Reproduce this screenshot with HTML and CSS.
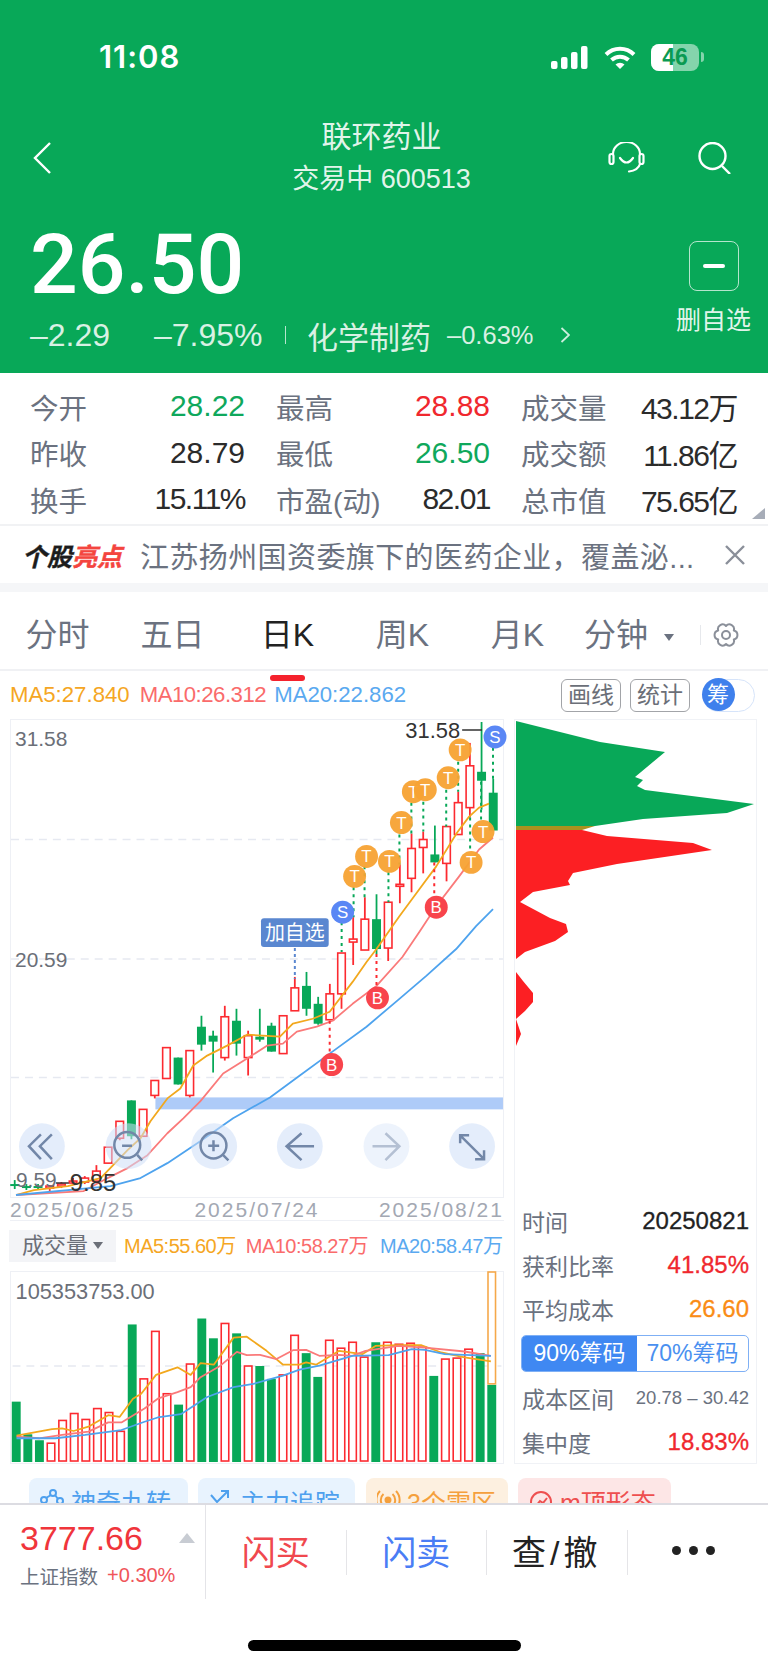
FILE: index.html
```html
<!DOCTYPE html>
<html lang="zh-CN">
<head>
    <meta charset="UTF-8">
    <meta name="viewport" content="width=device-width, initial-scale=1.0">
    <title>联环药业 600513</title>
    <link rel="stylesheet" href="styles.css">
</head>
<body>
<div class="page">
    <header class="top">
        <div class="status">
            <span class="clock">11:08</span>
            <div class="status-icons">
                <svg class="signal" width="37" height="23" viewBox="0 0 37 23"><rect x="0" y="15" width="6.5" height="8" rx="2"/><rect x="10" y="11" width="6.5" height="12" rx="2"/><rect x="20" y="6" width="6.5" height="17" rx="2"/><rect x="30" y="0" width="6.5" height="23" rx="2"/></svg>
                <svg class="wifi" width="32" height="23" viewBox="0 0 32 23"><path d="M2 8.5A20 20 0 0 1 30 8.5M7.5 14A12.5 12.5 0 0 1 24.5 14" fill="none" stroke="#fff" stroke-width="4"/><path d="M11.5 18.6A6.5 6.5 0 0 1 20.500 18.600L16 23Z" fill="#fff"/></svg>
                <div class="battery"><div class="battery-fill"></div><span class="battery-num">46</span></div>
                <div class="battery-nib"></div>
            </div>
        </div>
        <div class="nav">
            <svg class="back" width="18" height="32" viewBox="0 0 18 32"><path d="M17 1 2 16 17 31" fill="none" stroke="#fff" stroke-width="2.400"/></svg>
            <div class="nav-title">
                <div class="stock-name">联环药业</div>
                <div class="stock-code">交易中 600513</div>
            </div>
            <svg class="headset" width="37" height="32" viewBox="0 0 37 32" fill="none" stroke="#fff" stroke-width="2.200" stroke-linecap="round"><path d="M5 12A13.500 12 0 0 1 32 12"/><rect x="1.500" y="12" width="4" height="10" rx="2"/><rect x="31.500" y="12" width="4" height="10" rx="2"/><path d="M12 16Q18.500 25 25 16"/><path d="M32 22Q30 28.500 21 29.500"/></svg>
            <svg class="search" width="33" height="32" viewBox="0 0 33 32" fill="none" stroke="#fff" stroke-width="2.400"><circle cx="14.500" cy="14" r="13"/><path d="M24 24 32 32"/></svg>
        </div>
        <div class="quote">
            <div class="quote-left">
                <div class="price">26.50</div>
                <div class="quote-sub">
                    <span class="chg">–2.29</span>
                    <span class="pct">–7.95%</span>
                    <span class="quote-bar"></span>
                    <span class="sector">化学制药</span>
                    <span class="sector-pct">–0.63%</span>
                    <svg class="sector-more" width="10" height="16" viewBox="0 0 10 16"><path d="M1.500 1 9 8 1.500 15" fill="none" stroke="#fff" stroke-opacity=".8" stroke-width="1.800"/></svg>
                </div>
            </div>
            <div class="quote-right">
                <div class="minus-box"><span class="minus-bar"></span></div>
                <div class="minus-label">删自选</div>
            </div>
        </div>
    </header>

    <section class="stats">
        <div class="stat"><span class="stat-name">今开</span><span class="stat-val up-green">28.22</span></div>
        <div class="stat"><span class="stat-name">最高</span><span class="stat-val up-red">28.88</span></div>
        <div class="stat"><span class="stat-name">成交量</span><span class="stat-val stat-tight">43.12万</span></div>
        <div class="stat"><span class="stat-name">昨收</span><span class="stat-val">28.79</span></div>
        <div class="stat"><span class="stat-name">最低</span><span class="stat-val up-green">26.50</span></div>
        <div class="stat"><span class="stat-name">成交额</span><span class="stat-val stat-tight">11.86亿</span></div>
        <div class="stat"><span class="stat-name">换手</span><span class="stat-val stat-tight">15.11%</span></div>
        <div class="stat"><span class="stat-name">市盈(动)</span><span class="stat-val stat-tight">82.01</span></div>
        <div class="stat"><span class="stat-name">总市值</span><span class="stat-val stat-tight">75.65亿</span></div>
        <span class="stats-corner"></span>
    </section>

    <section class="notice">
        <div class="notice-logo">个股<em>亮点</em></div>
        <div class="notice-text">江苏扬州国资委旗下的医药企业，覆盖泌...</div>
        <svg class="notice-close" width="22" height="22" viewBox="0 0 22 22"><path d="M2 2 20 20M20 2 2 20" stroke="#8a8f99" stroke-width="2.400"/></svg>
    </section>

    <nav class="tabs">
        <a class="tab">分时</a>
        <a class="tab">五日</a>
        <a class="tab tab-on">日K</a>
        <a class="tab">周K</a>
        <a class="tab">月K</a>
        <a class="tab tab-min">分钟<i class="tab-arrow"></i></a>
        <span class="tab-split"></span>
        <svg class="gear" width="26" height="26" viewBox="0 0 26 26" fill="none" stroke="#8a8f99" stroke-width="2" stroke-linejoin="round"><path d="M13 4A4.600 4.600 0 0 1 20.800 8.500A4.600 4.600 0 0 1 20.800 17.500A4.600 4.600 0 0 1 13 22A4.600 4.600 0 0 1 5.200 17.500A4.600 4.600 0 0 1 5.200 8.500A4.600 4.600 0 0 1 13 4Z"/><circle cx="13" cy="13" r="4"/></svg>
    </nav>

    <div class="ma-row">
        <span class="ma5 ma-text">MA5:27.840</span>
        <span class="ma10 ma-text">MA10:26.312</span>
        <span class="ma20 ma-text">MA20:22.862</span>
        <div class="ma-tools">
            <span class="tool-btn">画线</span>
            <span class="tool-btn">统计</span>
            <div class="chip-toggle"><span class="chip-knob">筹</span></div>
        </div>
    </div>

    <div class="board">
        <div class="board-left">
            <svg class="kline" width="494" height="479" viewBox="10 720 494 479">
                <path class="grid-dash" d="M10 840H504M10 960H504M10 1079H504"/>
                <rect x="155" y="1099" width="349" height="12" fill="#aecbf8"/>
                <g id="candles"></g>
                <g id="maLines"></g>
                <g id="dots"></g>
                <g id="marks"></g>
                <g class="round-btns">
                    <circle cx="41" cy="1148" r="23"/><circle cx="128" cy="1148" r="23"/><circle cx="214" cy="1148" r="23"/><circle cx="300" cy="1148" r="23"/><circle class="btn-off" cx="387" cy="1148" r="23"/><circle cx="473" cy="1148" r="23"/>
                </g>
                <g class="btn-icons">
                    <path d="M40 1136 28 1148 40 1161M51 1136 39 1148 51 1161"/>
                    <circle cx="126.700" cy="1146.700" r="13"/><path d="M136.700 1156.700 141.700 1162.300M121.500 1147.500H131.500"/>
                    <circle cx="213.300" cy="1147.300" r="13"/><path d="M222.800 1156.800 228.300 1162.300M213.300 1142V1153M208 1147.500H219"/>
                    <path d="M286.700 1148H314.300M301.700 1135 286.700 1148 301.700 1162"/>
                    <path class="icon-off" d="M373 1148H400M386 1135 400 1148 386 1162"/>
                    <path d="M461 1137 485 1161M461 1145V1137H470M485 1152V1161H476"/>
                </g>
                <text class="axis-num" x="14" y="746">31.58</text>
                <text class="axis-num" x="14" y="968">20.59</text>
                <text class="axis-num" x="15" y="1189">9.59</text>
                <text class="peak-num" x="406" y="738">31.58</text>
                <path d="M463 730H483M55 1185H68" stroke="#333" stroke-width="1.500"/>
                <text class="low-num" x="69" y="1193">9.85</text>
                <g class="watch-tag">
                    <path d="M295 949V980" stroke="#5a87d0" stroke-width="2" stroke-dasharray="3 3"/>
                    <rect x="261" y="919" width="68" height="29" rx="3" fill="#5a87d0"/>
                    <text x="295" y="941">加自选</text>
                </g>
            </svg>
            <div class="dates"><span>2025/06/25</span><span>2025/07/24</span><span>2025/08/21</span></div>
            <div class="vol-head">
                <div class="vol-pick">成交量<i class="vol-arrow"></i></div>
                <span class="ma5 vol-ma">MA5:55.60万</span>
                <span class="ma10 vol-ma">MA10:58.27万</span>
                <span class="ma20 vol-ma">MA20:58.47万</span>
            </div>
            <svg class="volume" width="494" height="193" viewBox="10 1272 494 193">
                <path class="grid-dash" d="M10 1367H504"/>
                <g id="volBars"></g>
                <g id="volLines"></g>
                <text class="axis-num vol-max" x="13" y="1299">105353753.00</text>
            </svg>
        </div>
        <aside class="chips">
            <svg class="chips-shape" width="241" height="470" viewBox="515 721 241 470">
                <polygon fill="#08a858" points="516,722 600,743 665,753 635,778 643,781 637,787 645,791 754,805 727,814 643,820 595,827 516,827"/>
                <polygon fill="#a8921f" points="516,827 595,827 582,831 516,831"/>
                <polygon fill="#fc1f23" points="516,831 582,831 607,837 693,844 712,851 617,865 573,874 568,882 570,886 533,893 520,903 550,919 566,925 568,933 555,942 525,953 516,960"/>
                <polygon fill="#fc1f23" points="516,973 523,982 533,994 533,1003 525,1012 516,1020 521,1035 516,1047"/>
            </svg>
            <div class="chips-info">
                <div class="info-row"><span>时间</span><b class="info-dark">20250821</b></div>
                <div class="info-row"><span>获利比率</span><b class="info-red">41.85%</b></div>
                <div class="info-row"><span>平均成本</span><b class="info-orange">26.60</b></div>
                <div class="seg"><span class="seg-on">90%筹码</span><span class="seg-off">70%筹码</span></div>
                <div class="info-row"><span>成本区间</span><b class="info-range">20.78 – 30.42</b></div>
                <div class="info-row"><span>集中度</span><b class="info-red">18.83%</b></div>
            </div>
        </aside>
    </div>

    <div class="tags">
        <div class="tag tag-blue"><svg width="25" height="26" viewBox="0 0 25 26" fill="none" stroke="#4ea0ee" stroke-width="2"><circle cx="4" cy="11" r="3"/><circle cx="13" cy="4" r="3"/><circle cx="20" cy="12" r="3"/><path d="M6 9 11 6M15 6 18 10"/></svg><span>神奇九转</span></div>
        <div class="tag tag-track"><svg width="25" height="26" viewBox="0 0 25 26" fill="none" stroke="#4ea0ee" stroke-width="2"><path d="M2 6 8 13 19 2M12 2H19V9"/></svg><span>主力追踪</span></div>
        <div class="tag tag-orange"><svg width="24" height="26" viewBox="0 0 24 26" fill="none" stroke="#f5a03c" stroke-width="2"><circle cx="11" cy="11" r="2.500" fill="#f5a03c"/><path d="M6.500 5A8 8 0 0 0 6.500 17M15.500 5A8 8 0 0 1 15.500 17M3 2A13 13 0 0 0 3 20M19 2A13 13 0 0 1 19 20"/></svg><span>3个雷区</span></div>
        <div class="tag tag-red"><svg width="25" height="26" viewBox="0 0 25 26" fill="none" stroke="#ee4f4f" stroke-width="2"><circle cx="12" cy="13" r="10"/><path d="M7 17 11 12 14 14 18 9"/></svg><span>m顶形态</span></div>
    </div>

    <footer class="dock">
        <div class="dock-main">
            <div class="index-box">
                <div class="index-num">3777.66<i class="index-arrow"></i></div>
                <div class="index-sub"><span class="index-name">上证指数</span><span class="index-pct">+0.30%</span></div>
            </div>
            <div class="dock-btns">
                <a class="dock-btn dock-buy">闪买</a>
                <a class="dock-btn dock-sell">闪卖</a>
                <a class="dock-btn dock-query">查/撤</a>
                <a class="dock-btn dock-more"><i></i><i></i><i></i></a>
            </div>
        </div>
        <div class="home-bar"></div>
    </footer>
</div>
<script src="chart.js"></script>
</body>
</html>
```
FILE: styles.css
```css
* {
    box-sizing: border-box;
}

body {
    margin: 0;
    background: #fff;
    font-family: "Liberation Sans", "Noto Sans CJK SC", sans-serif;
    color: #222;
}

.page {
    width: 768px;
    height: 1667px;
    overflow: hidden;
}

.top {
    height: 373px;
    background: #08a858;
    color: #fff;
}

.status {
    height: 116px;
    padding: 40px 27px 0 99px;
    display: flex;
    justify-content: space-between;
}

.clock {
    font-family: Inter, "Liberation Sans", sans-serif;
    font-size: 31px;
    font-weight: 600;
    line-height: 34px;
    letter-spacing: 1px;
}

.status-icons {
    display: flex;
    align-items: center;
    height: 34px;
    margin-right: 37px;
}

.signal {
    fill: #fff;
    margin-right: 16px;
}

.wifi {
    margin-right: 15px;
}

.battery {
    position: relative;
    width: 48px;
    height: 27px;
    border-radius: 8px;
    overflow: hidden;
    background: rgba(255, 255, 255, 0.5);
    text-align: center;
}

.battery-fill {
    position: absolute;
    left: 0;
    top: 0;
    bottom: 0;
    width: 46%;
    background: #fff;
}

.battery-num {
    position: relative;
    font-size: 23px;
    font-weight: 700;
    line-height: 27px;
    color: #0a9a52;
}

.battery-nib {
    width: 3px;
    height: 10px;
    margin-left: 2px;
    border-radius: 0 3px 3px 0;
    background: rgba(255, 255, 255, 0.5);
}

.nav {
    height: 84px;
    padding: 0 37px 0 33px;
    display: flex;
    align-items: center;
}

.nav-title {
    flex: 1;
    text-align: center;
    margin-left: 110px;
    margin-right: 6px;
    color: rgba(255, 255, 255, 0.9);
}

.stock-name {
    font-size: 30px;
    line-height: 42px;
}

.stock-code {
    font-size: 27px;
    line-height: 42px;
}

.search {
    margin-left: 53px;
}

.quote {
    height: 173px;
    padding: 0 17px 0 30px;
    display: flex;
    justify-content: space-between;
}

.price {
    margin-top: 25px;
    font-family: Roboto, "Liberation Sans", sans-serif;
    font-size: 84px;
    font-weight: 500;
    line-height: 80px;
}

.quote-sub {
    display: flex;
    align-items: center;
    height: 40px;
    margin-top: 10px;
    color: rgba(255, 255, 255, 0.85);
}

.chg,
.pct {
    font-size: 32px;
}

.chg {
    width: 124px;
}

.pct {
    width: 131px;
}

.quote-bar {
    width: 1px;
    height: 18px;
    background: rgba(255, 255, 255, 0.7);
    margin-right: 21px;
}

.sector {
    width: 140px;
    font-size: 31px;
}

.sector-pct {
    width: 113px;
    font-size: 25.500px;
}

.quote-right {
    width: 75px;
    padding-top: 41px;
    text-align: center;
}

.minus-box {
    width: 50px;
    height: 50px;
    margin: 0 auto 14px;
    border: 1.5px solid rgba(255, 255, 255, 0.7);
    border-radius: 8px;
    display: flex;
    align-items: center;
    justify-content: center;
}

.minus-bar {
    width: 22px;
    height: 4px;
    border-radius: 2px;
    background: #fff;
}

.minus-label {
    font-size: 25px;
    line-height: 30px;
    white-space: nowrap;
    color: rgba(255, 255, 255, 0.9);
}

.stats {
    position: relative;
    height: 153px;
    padding: 10px 0 0 30px;
    display: grid;
    grid-template-columns: 215px 214px 216px;
    grid-auto-rows: 46.5px;
    column-gap: 31px;
    border-bottom: 2px solid #f1f2f4;
}

.stat {
    display: flex;
    align-items: center;
    justify-content: space-between;
    white-space: nowrap;
}

.stat-name {
    font-size: 28.500px;
    color: #6b7280;
}

.stat-val {
    font-size: 30px;
    color: #2b2b2b;
}

.stat-tight {
    letter-spacing: -1.500px;
}

.up-green {
    color: #0fa85c;
}

.up-red {
    color: #f0282e;
}

.stats-corner {
    position: absolute;
    right: 3px;
    bottom: 5px;
    border-style: solid;
    border-width: 0 0 11px 13px;
    border-color: transparent transparent #a7adb8 transparent;
}

.notice {
    height: 57px;
    padding: 0 22px 0 22px;
    display: flex;
    align-items: center;
}

.notice-logo {
    width: 118px;
    font-size: 25px;
    font-weight: 700;
    font-style: italic;
    color: #1c1c1c;
    white-space: nowrap;
    -webkit-text-stroke: 0.400px currentColor;
}

.notice-logo em {
    color: #f4453f;
}

.notice-text {
    flex: 1;
    font-size: 29px;
    letter-spacing: 0.400px;
    color: #6b7280;
    white-space: nowrap;
}

.tabs {
    height: 88px;
    padding-top: 9px;
    border-top: 9px solid #f5f6f8;
    border-bottom: 2px solid #f0f1f4;
    padding-bottom: 0;
    display: flex;
    align-items: center;
    position: relative;
}

.tab {
    width: 115px;
    text-align: center;
    font-size: 32px;
    color: #6b7280;
    position: relative;
    line-height: 56px;
    white-space: nowrap;
}

.tab-on {
    color: #222;
}

.tab-on::after {
    content: "";
    position: absolute;
    left: 40px;
    bottom: -18px;
    width: 35px;
    height: 6px;
    border-radius: 3px;
    background: #f5222d;
}

.tab-min {
    text-align: left;
    padding-left: 9px;
}

.tab-arrow {
    display: inline-block;
    margin-left: 16px;
    vertical-align: 5px;
    border-style: solid;
    border-width: 7px 5px 0 5px;
    border-color: #6b7280 transparent transparent transparent;
}

.tab-split {
    width: 1px;
    height: 20px;
    margin-left: 10px;
    background: #e6e8ec;
}

.gear {
    margin-left: 12px;
}

.ma-row {
    height: 48px;
    padding: 0 13px 0 10px;
    display: flex;
    align-items: center;
}

.ma-text {
    font-size: 22.200px;
    margin-right: 8px;
    white-space: nowrap;
}

.ma5.ma-text {
    margin-right: 10px;
}

.ma10.ma-text {
    letter-spacing: -0.500px;
}

.ma5 {
    color: #f5a623;
}

.ma10 {
    color: #fa6b6b;
}

.ma20 {
    color: #5aa9f0;
}

.ma-tools {
    margin-left: auto;
    display: flex;
    align-items: center;
}

.tool-btn {
    width: 60px;
    height: 33px;
    margin-right: 9px;
    border: 1.5px solid #a2a4a8;
    border-radius: 6px;
    font-size: 23px;
    line-height: 30px;
    text-align: center;
    color: #6b6f78;
}

.chip-toggle {
    width: 53px;
    height: 33px;
    margin-left: 3px;
    border: 1.5px solid #d6e4fa;
    border-radius: 17px;
}

.chip-knob {
    display: block;
    width: 33px;
    height: 33px;
    margin: -1.5px;
    border-radius: 50%;
    background: #3f80ec;
    color: #fff;
    font-size: 22px;
    line-height: 33px;
    text-align: center;
}

.board {
    height: 745px;
    padding-left: 10px;
    display: flex;
}

.board-left {
    width: 494px;
    flex: none;
}

.kline,
.volume {
    display: block;
    overflow: visible;
    border: 1px solid #eef0f5;
}

.grid-dash {
    fill: none;
    stroke: #e6e9f1;
    stroke-width: 1.500;
    stroke-dasharray: 8 6;
}

.round-btns circle {
    fill: rgba(205, 222, 247, 0.55);
}

.round-btns .btn-off {
    fill: rgba(220, 232, 250, 0.5);
}

.btn-icons {
    fill: none;
    stroke: #7287a8;
    stroke-width: 2.500;
}

.btn-icons .icon-off {
    stroke: #b4c0d3;
}

.axis-num {
    font-size: 21px;
    fill: #6b6f78;
}

.peak-num {
    font-size: 22px;
    fill: #333;
}

.low-num {
    font-size: 24px;
    fill: #333;
}

.watch-tag text {
    font-size: 20px;
    fill: #fff;
    text-anchor: middle;
}

.mark-t {
    fill: #f7a233;
    opacity: 0.95;
}

.mark-s {
    fill: #5a87f5;
}

.mark-b {
    fill: #f8444c;
}

.mark-txt {
    font-size: 17px;
    fill: #fff;
    text-anchor: middle;
}

.dates {
    height: 23px;
    display: flex;
    justify-content: space-between;
    font-size: 21px;
    line-height: 23px;
    letter-spacing: 2px;
    color: #a3a8b3;
    white-space: nowrap;
    border-bottom: 1px solid #eef0f5;
}

.vol-head {
    height: 50px;
    padding-top: 9px;
    display: flex;
    align-items: flex-start;
    margin-left: -1px;
}

.vol-pick {
    flex: none;
    width: 107px;
    height: 32px;
    margin-right: 8px;
    padding-left: 13px;
    background: #f3f4f7;
    font-size: 22px;
    line-height: 32px;
    color: #6b6f78;
    white-space: nowrap;
}

.vol-arrow {
    display: inline-block;
    margin-left: 5px;
    vertical-align: 4px;
    border-style: solid;
    border-width: 7px 5px 0 5px;
    border-color: #6b6f78 transparent transparent transparent;
}

.vol-ma {
    flex: none;
    font-size: 20px;
    line-height: 32px;
    margin-right: 10px;
    letter-spacing: -0.500px;
    white-space: nowrap;
}

.vol-ma.ma10 {
    margin-right: 12px;
}

.vol-max {
    font-size: 22px;
}

.chips {
    width: 243px;
    height: 745px;
    margin-left: 10px;
    border: 1px solid #f0f2f6;
}

.chips-shape {
    display: block;
}

.chips-info {
    margin-top: 9px;
    padding: 0 7px 0 7px;
}

.info-row {
    height: 44px;
    display: flex;
    align-items: center;
    justify-content: space-between;
    font-size: 23px;
    color: #6b7280;
    white-space: nowrap;
}

.info-row b {
    font-weight: 400;
    font-size: 24px;
    -webkit-text-stroke: 0.300px currentColor;
}

.info-dark {
    color: #222;
}

.info-red {
    color: #f0282e;
}

.info-orange {
    color: #fa8c16;
}

.info-row .info-range {
    font-size: 18.500px;
    color: #6b7280;
    -webkit-text-stroke: 0;
}

.seg {
    height: 37px;
    margin: 4px 0 4px -1px;
    display: flex;
    border: 1.500px solid #7fb0f5;
    border-radius: 5px;
    overflow: hidden;
    font-size: 23px;
    line-height: 34px;
    text-align: center;
    white-space: nowrap;
}

.seg-on {
    width: 115px;
    background: #3f88f2;
    color: #fff;
}

.seg-off {
    flex: 1;
    color: #4a90f0;
}

.tags {
    height: 39px;
    padding: 14px 0 0 29px;
    display: flex;
    gap: 10px;
    overflow: hidden;
}

.tag {
    flex: none;
    height: 50px;
    padding: 8px 0 0 11px;
    display: flex;
    gap: 6px;
    border-radius: 8px;
    font-size: 25px;
    line-height: 34px;
    white-space: nowrap;
}

.tag svg {
    margin-top: 3px;
    flex: none;
}

.tag-blue,
.tag-track {
    background: #e8f3fe;
    color: #4ea0ee;
}

.tag-blue {
    width: 159px;
}

.tag-track {
    width: 157px;
    margin-right: 1px;
}

.tag-orange {
    width: 142px;
    background: #fdf0e0;
    color: #f5a03c;
}

.tag-red {
    width: 153px;
    background: #fde6e6;
    color: #ee4f4f;
}

.dock {
    height: 163px;
    border-top: 2px solid #dcdce2;
    background: #fff;
}

.dock-main {
    height: 94px;
    display: flex;
}

.index-box {
    flex: none;
    width: 206px;
    padding: 12px 0 0 20px;
    border-right: 1px solid #e4e4e8;
}

.index-num {
    position: relative;
    font-size: 34px;
    line-height: 42px;
    color: #f0353b;
}

.index-arrow {
    position: absolute;
    left: 159px;
    top: 16px;
    border-style: solid;
    border-width: 0 8px 10px 8px;
    border-color: transparent transparent #c8ccd3 transparent;
}

.index-sub {
    margin-top: 2px;
    display: flex;
    align-items: center;
    white-space: nowrap;
}

.index-name {
    font-size: 19.500px;
    color: #6b7280;
    margin-right: 9px;
}

.index-pct {
    font-size: 20px;
    color: #f0555a;
}

.dock-btns {
    flex: 1;
    display: flex;
    padding-top: 25px;
    height: 70px;
}

.dock-btn {
    flex: none;
    width: 140.500px;
    height: 45px;
    display: flex;
    align-items: center;
    justify-content: center;
    padding-bottom: 4px;
    font-size: 34px;
    border-right: 1px solid #e5e5e8;
}

.dock-buy {
    color: #f0484e;
}

.dock-sell {
    color: #4a7df5;
}

.dock-query {
    color: #222;
    letter-spacing: 4px;
}

.dock-more {
    gap: 8px;
    border-right: 0;
    padding-right: 8px;
}

.dock-more i {
    width: 9px;
    height: 9px;
    border-radius: 50%;
    background: #222;
}

.home-bar {
    width: 273px;
    height: 11px;
    margin: 41px auto 0;
    border-radius: 6px;
    background: #000;
}
```
FILE: chart.js
```js
// k line data read from screen: [bodyTop, bodyBottom, wickTop, wickBottom, color]
const RED = "#fc2a30";
const GREEN = "#08a858";
const K = [
    [1186, 1188, 1182, 1191, "g"], [1188, 1190, 1186, 1192, "g"], [1188, 1190, 1186, 1192, "g"],
    [1188, 1190, 1187, 1194, "r"], [1186, 1188, 1184, 1190, "r"], [1183, 1185, 1180, 1187, "r"],
    [1180, 1184, 1178, 1186, "r"], [1173, 1183, 1167, 1185, "r"], [1149, 1165, 1149, 1165, "r"],
    [1123, 1140, 1123, 1142, "r"], [1102, 1138, 1102, 1141, "g"], [1111, 1138, 1111, 1138, "r"],
    [1082, 1097, 1082, 1100, "r"], [1049, 1080, 1049, 1080, "r"], [1059, 1086, 1059, 1086, "g"],
    [1052, 1097, 1052, 1099, "r"], [1028, 1046, 1017, 1052, "g"], [1037, 1043, 1032, 1074, "g"],
    [1018, 1059, 1007, 1062, "r"], [1022, 1045, 1010, 1057, "g"], [1037, 1059, 1032, 1077, "r"],
    [1038, 1041, 1010, 1043, "g"], [1027, 1053, 1024, 1053, "g"], [1017, 1055, 1017, 1055, "r"],
    [989, 1012, 978, 1012, "r"], [987, 1010, 973, 1017, "g"], [1005, 1025, 998, 1026, "g"],
    [995, 1021, 985, 1021, "r"], [954, 995, 954, 1010, "r"], [940, 943, 918, 966, "r"],
    [920, 951, 898, 951, "r"], [920, 950, 895, 955, "g"], [903, 949, 903, 962, "r"],
    [885, 887, 865, 904, "r"], [849, 879, 834, 893, "r"], [840, 848, 832, 874, "r"],
    [855, 863, 826, 863, "g"], [827, 864, 827, 882, "r"], [803, 835, 792, 835, "r"],
    [766, 808, 743, 818, "r"], [772, 781, 722, 810, "g"], [793, 831, 779, 831, "g"]
];

// volume bar tops, in px from top of page, last one has an extra orange box
const VOL = [
    [1403, "g"], [1436, "g"], [1442, "g"], [1445, "r"], [1422, "r"], [1415, "r"], [1421, "r"],
    [1410, "r"], [1414, "r"], [1433, "r"], [1325, "g"], [1380, "r"], [1332, "r"], [1395, "r"],
    [1406, "g"], [1365, "r"], [1319, "g"], [1339, "g"], [1324, "r"], [1334, "g"], [1367, "r"],
    [1367, "g"], [1380, "g"], [1376, "r"], [1336, "r"], [1354, "g"], [1378, "g"], [1341, "r"],
    [1349, "r"], [1343, "r"], [1358, "r"], [1343, "g"], [1343, "r"], [1345, "r"], [1344, "r"],
    [1348, "r"], [1377, "g"], [1360, "r"], [1359, "r"], [1350, "r"], [1354, "g"], [1386, "g"]
];

const X = i => 13.7 + 11.72 * i;

function pts(list) {
    return list.map(p => p[0] + "," + p[1]).join(" ");
}

function line(list, color) {
    return `<polyline points="${pts(list)}" fill="none" stroke="${color}" stroke-width="1.800" stroke-linejoin="round"/>`;
}

let html = "";
K.forEach((c, i) => {
    const x = X(i);
    const col = c[4] === "g" ? GREEN : RED;
    html += `<path d="M${x} ${c[2]}V${c[3]}" stroke="${col}" stroke-width="1.800"/>`;
    if (c[4] === "g") {
        html += `<rect x="${x - 4.500}" y="${c[0]}" width="9" height="${c[1] - c[0]}" fill="${col}"/>`;
    } else {
        html += `<rect x="${x - 3.800}" y="${c[0]}" width="7.600" height="${c[1] - c[0]}" fill="#fff" stroke="${col}" stroke-width="1.600"/>`;
    }
});
document.getElementById("candles").innerHTML = html;

document.getElementById("maLines").innerHTML =
    line([[15, 1197], [33, 1192], [67, 1188], [100, 1180], [127, 1152], [140, 1140], [150, 1123], [167, 1100], [180, 1090], [193, 1067], [207, 1057], [227, 1047], [247, 1036], [280, 1038], [293, 1025], [313, 1020], [330, 1013], [353, 983], [367, 963], [377, 950], [400, 917], [420, 890], [437, 867], [458, 833], [470, 817], [480, 808], [490, 804]], "#f2a81d") +
    line([[15, 1197], [83, 1193], [107, 1180], [127, 1170], [147, 1157], [167, 1135], [183, 1120], [200, 1103], [223, 1075], [247, 1060], [267, 1047], [283, 1045], [297, 1033], [317, 1028], [333, 1022], [353, 1005], [377, 987], [403, 958], [420, 933], [437, 907], [460, 877], [480, 850], [494, 838]], "#fa7a7a") +
    line([[15, 1197], [110, 1188], [140, 1180], [167, 1165], [200, 1143], [233, 1120], [270, 1099], [300, 1077], [330, 1055], [367, 1028], [400, 1000], [427, 977], [457, 950], [477, 927], [494, 910]], "#4ea3ee");

// dotted lines between the markers and the candles, [x, from, to, color]
const DOTS = [
    [342, 923, 953, GREEN], [354, 888, 918, GREEN], [365, 867, 898, GREEN], [389, 873, 903, GREEN], [400, 835, 865, GREEN],
    [412, 803, 834, GREEN], [424, 802, 832, GREEN], [447, 790, 827, GREEN], [459, 762, 792, GREEN], [494, 748, 779, GREEN],
    [482, 782, 820, GREEN], [471, 818, 852, GREEN], [330, 1022, 1055, RED], [377, 955, 988, RED], [435, 863, 897, RED]
];
document.getElementById("dots").innerHTML = DOTS.map(d =>
    `<path d="M${d[0]} ${d[1]}V${d[2]}" stroke="${d[3]}" stroke-width="2" stroke-dasharray="3 4"/>`).join("");

const MARKS = [
    ["T", 355, 877], ["T", 367, 857], ["T", 390, 862], ["T", 402, 823], ["T", 414, 792], ["T", 426, 790],
    ["T", 449, 778], ["T", 461, 750], ["T", 484, 832], ["T", 472, 863], ["S", 343, 913], ["S", 496, 737],
    ["B", 332, 1066], ["B", 378, 999], ["B", 437, 908]
];
document.getElementById("marks").innerHTML = MARKS.map(m =>
    `<circle class="mark-${m[0].toLowerCase()}" cx="${m[1]}" cy="${m[2]}" r="11.500"/><text class="mark-txt" x="${m[1]}" y="${m[2] + 6}">${m[0]}</text>`).join("");

const BOTTOM = 1464;
let bars = "";
VOL.forEach((v, i) => {
    const x = X(i);
    if (v[1] === "g") {
        bars += `<rect x="${x - 4.500}" y="${v[0]}" width="9" height="${BOTTOM - v[0]}" fill="${GREEN}"/>`;
    } else {
        bars += `<rect x="${x - 3.800}" y="${v[0]}" width="7.600" height="${BOTTOM - v[0] - 1}" fill="#fff" stroke="${RED}" stroke-width="1.600"/>`;
    }
});
bars += `<rect x="${X(41) - 3.800}" y="1272" width="7.600" height="113" fill="#fff" stroke="#f5a84a" stroke-width="1.600"/>`;
document.getElementById("volBars").innerHTML = bars;

function volY(list) {
    return list.map(p => [p[0] / 3, p[1] / 3 + 1220]);
}

document.getElementById("volLines").innerHTML =
    line(volY([[42, 652], [150, 632], [180, 630], [215, 638], [260, 625], [320, 590], [355, 595], [395, 540], [420, 525], [465, 468], [530, 445], [570, 468], [600, 432], [640, 437], [700, 355], [740, 352], [800, 395], [850, 437], [900, 437], [920, 430], [950, 437], [1020, 395], [1090, 405], [1130, 380], [1200, 378], [1270, 378], [1330, 400], [1400, 415], [1480, 427]]), "#f2a81d") +
    line(volY([[42, 655], [110, 660], [180, 650], [260, 640], [320, 612], [360, 612], [430, 570], [470, 540], [530, 520], [570, 505], [600, 475], [660, 440], [710, 398], [740, 408], [780, 407], [830, 420], [880, 393], [920, 392], [960, 410], [1020, 407], [1060, 410], [1100, 395], [1200, 380], [1280, 385], [1400, 397], [1480, 410]]), "#fa7a7a") +
    line(volY([[42, 660], [160, 660], [250, 650], [360, 635], [430, 610], [470, 597], [540, 587], [620, 535], [700, 505], [760, 495], [850, 470], [900, 452], [960, 440], [1060, 410], [1170, 408], [1240, 390], [1280, 392], [1340, 405], [1480, 410]]), "#4ea3ee");
```
